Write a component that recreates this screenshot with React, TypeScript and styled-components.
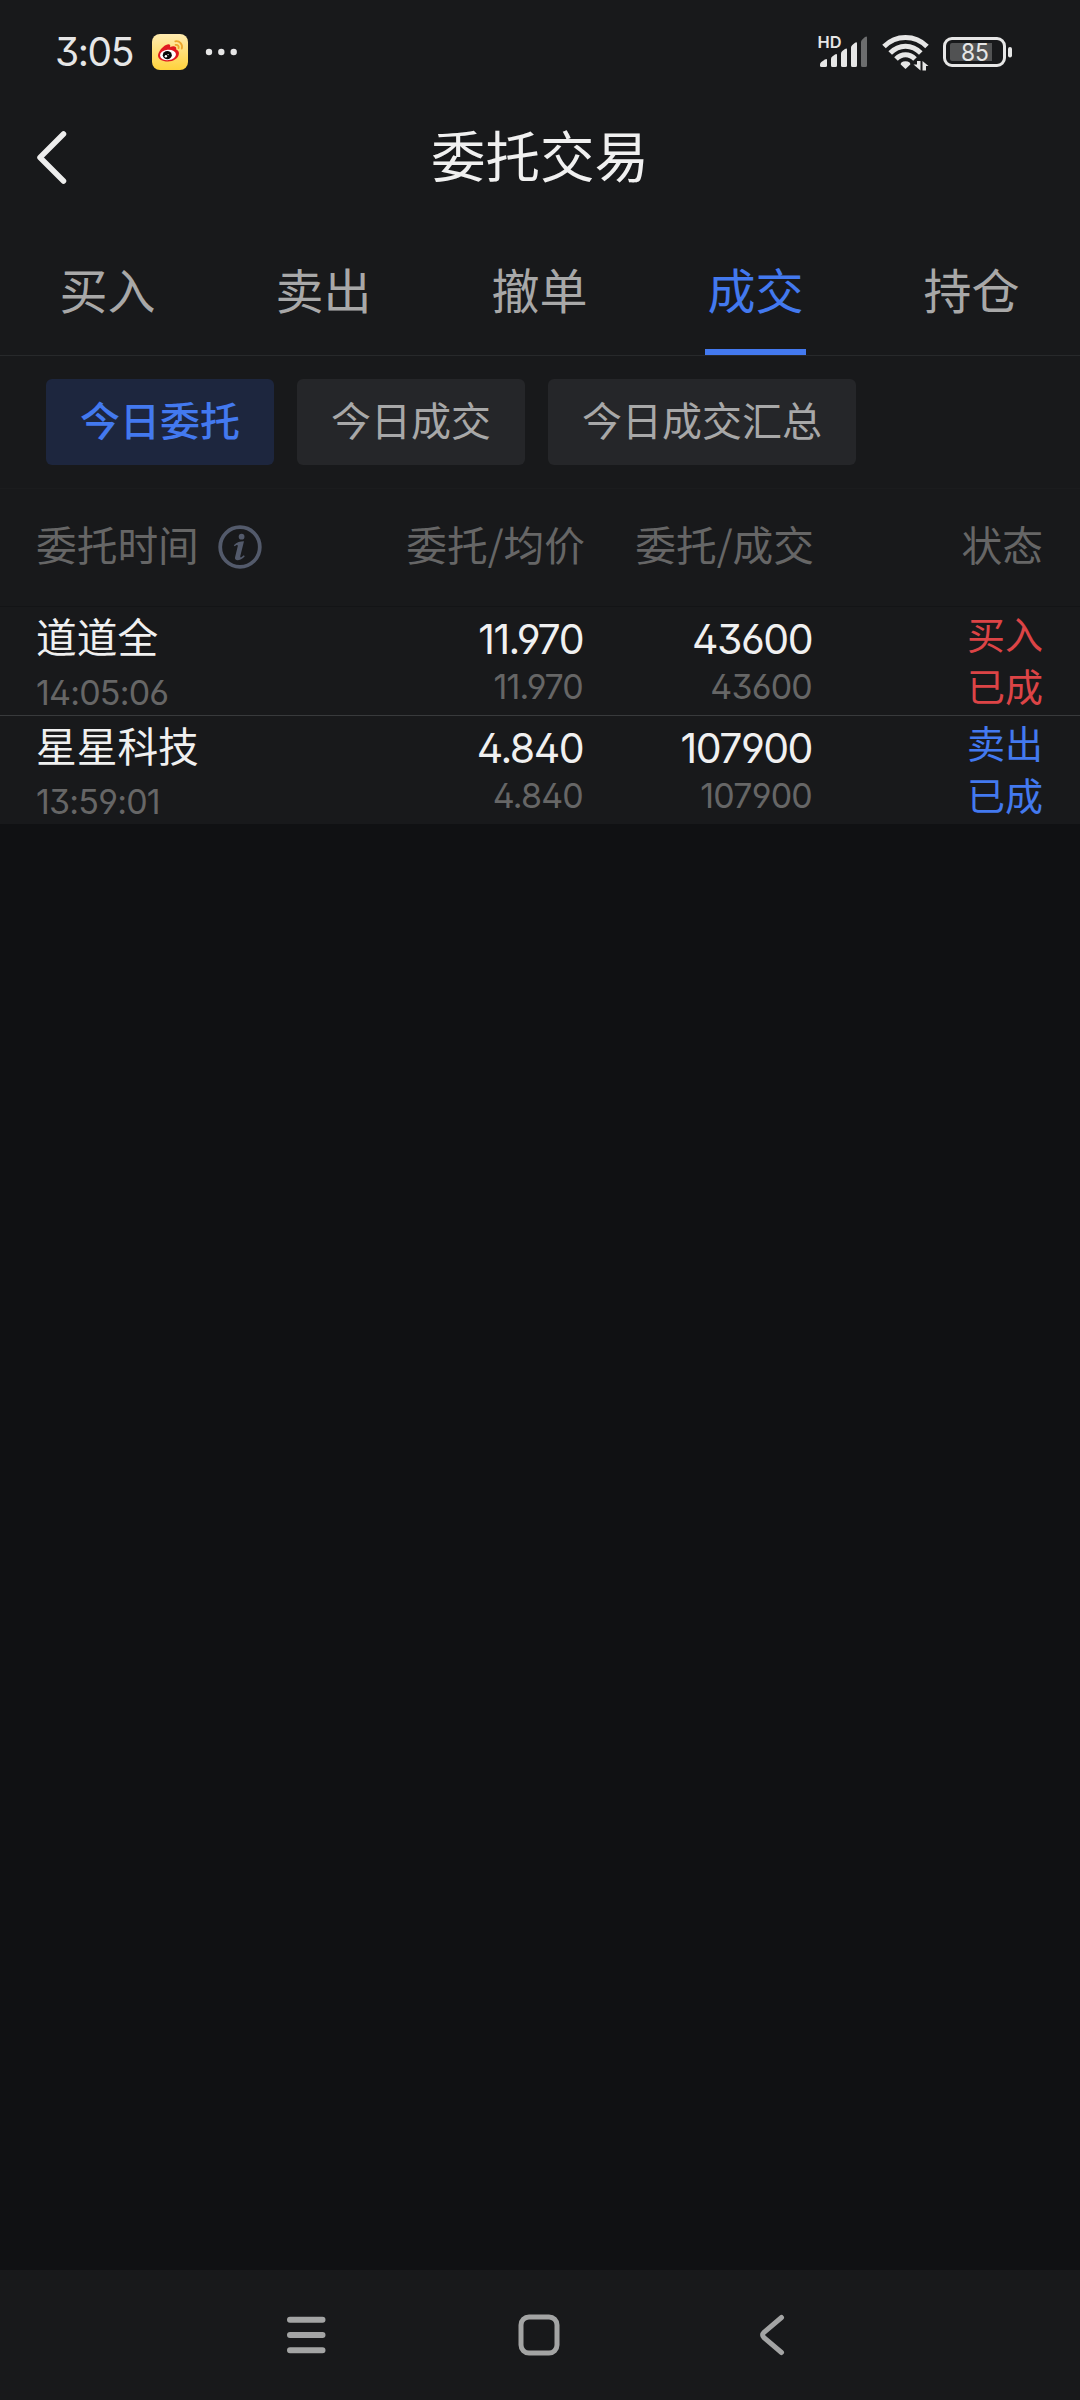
import React from "react";
import styled, { createGlobalStyle } from "styled-components";

const cjk = `"Noto Sans CJK SC", "Noto Sans", sans-serif`;
const latin = `Inter, "Noto Sans CJK SC", sans-serif`;

const color = {
  panel: "#18191b",
  page: "#101113",
  line: "#27292b",
  white: "#f0f0f0",
  tab: "#a8a8a8",
  muted: "#666666",
  blue: "#4379ef",
  red: "#dc4446",
  chip: "#252629",
  chipOn: "#1d263e",
};

const GlobalStyle = createGlobalStyle`
  html, body { margin: 0; background: ${color.page}; }
  * { box-sizing: border-box; }
`;

const Screen = styled.div`
  display: flex;
  flex-direction: column;
  width: 1080px;
  height: 2400px;
  background: ${color.page};
  font-family: ${cjk};
  overflow: hidden;
`;

const StatusBar = styled.div`
  display: flex;
  align-items: center;
  justify-content: space-between;
  height: 104px;
  padding: 0 68px 0 55px;
  background: ${color.panel};
`;

const StatusGroup = styled.div<{ $gap: number }>`
  display: flex;
  align-items: center;
  gap: ${(p) => p.$gap}px;
`;

const Clock = styled.span`
  width: 80px;
  font: 400 39px/48px ${latin};
  font-feature-settings: "cv09", "ss01";
  letter-spacing: -1.4px;
  color: #e6e6e6;
  white-space: nowrap;
`;

const TitleBar = styled.header`
  display: grid;
  grid-template-columns: 120px 1fr 120px;
  align-items: center;
  height: 105px;
  background: ${color.panel};
`;

const BackButton = styled.button`
  display: flex;
  padding: 0 0 0 35px;
  border: 0;
  background: none;
`;

const Title = styled.h1`
  margin: 0 0 6px;
  font: 400 54.5px/80px ${cjk};
  text-align: center;
  color: ${color.white};
`;

const Tabs = styled.nav`
  display: grid;
  grid-template-columns: repeat(5, 1fr);
  height: 147px;
  border-bottom: 1px solid ${color.line};
  background: ${color.panel};
`;

const Tab = styled.button<{ $active: boolean }>`
  display: flex;
  justify-content: center;
  align-items: flex-end;
  width: 101px;
  margin: 0 auto 0 57px;
  padding: 0 0 26px;
  border: 0;
  border-bottom: 6px solid ${(p) => (p.$active ? color.blue : "transparent")};
  background: none;
  font: 400 48px/70px ${cjk};
  white-space: nowrap;
  color: ${(p) => (p.$active ? color.blue : color.tab)};
`;

const Chips = styled.div`
  display: flex;
  gap: 23px;
  height: 133px;
  padding: 23px 46px 0;
  border-bottom: 1px solid #1b1c1e;
  background: ${color.panel};
`;

const Chip = styled.button<{ $active: boolean }>`
  height: 86px;
  padding: 0 34px 6px;
  border: 0;
  border-radius: 6px;
  background: ${(p) => (p.$active ? color.chipOn : color.chip)};
  font: ${(p) => (p.$active ? 500 : 400)} 40px/60px ${cjk};
  white-space: nowrap;
  color: ${(p) => (p.$active ? color.blue : color.tab)};
`;

const rowGrid = `
  display: grid;
  grid-template-columns: 303px 246px 229px 229px;
  padding: 0 37px 0 36px;
`;

const TableHead = styled.div`
  ${rowGrid}
  align-items: center;
  height: 118px;
  border-bottom: 1px solid #131416;
  background: ${color.panel};
  font: 400 40.7px/60px ${cjk};
  color: ${color.muted};
`;

const HeadCell = styled.div<{ $left?: boolean }>`
  display: flex;
  align-items: center;
  justify-content: ${(p) => (p.$left ? "flex-start" : "flex-end")};
  gap: 19px;
  margin-bottom: 7px;
  white-space: nowrap;
`;

const InfoIcon = styled.svg`
  margin-top: 6px;
`;

const OrderRow = styled.div<{ $divided: boolean }>`
  ${rowGrid}
  height: ${(p) => (p.$divided ? 109 : 108)}px;
  border-bottom: ${(p) => (p.$divided ? "1px solid #383a3c" : "0")};
  background: ${color.panel};
`;

const Cell = styled.div<{ $left?: boolean; $numeric?: boolean }>`
  display: flex;
  flex-direction: column;
  align-items: ${(p) => (p.$left ? "flex-start" : "flex-end")};
  padding-right: ${(p) => (p.$numeric ? 2 : 0)}px;
  white-space: nowrap;
`;

const StockName = styled.span`
  margin-top: 1px;
  font: 400 40.7px/56px ${cjk};
  color: ${color.white};
`;

const OrderTime = styled.span`
  margin-top: 9px;
  font: 400 34px/40px ${latin};
  font-feature-settings: "cv09", "ss01";
  letter-spacing: -0.8px;
  color: ${color.muted};
`;

const Figure = styled.span`
  margin-top: 8px;
  font: 400 41px/48px ${latin};
  font-feature-settings: "cv09", "ss01";
  letter-spacing: -1.5px;
  color: ${color.white};
`;

const SubFigure = styled.span`
  margin-top: 4px;
  font: 400 34px/40px ${latin};
  font-feature-settings: "cv09", "ss01";
  letter-spacing: -0.8px;
  color: ${color.muted};
`;

const State = styled.span<{ $buy: boolean }>`
  font: 400 38px/51.5px ${cjk};
  color: ${(p) => (p.$buy ? color.red : color.blue)};
`;

const Empty = styled.main`
  flex: 1;
`;

const NavBar = styled.footer`
  display: grid;
  grid-template-columns: 232px 241px 26px;
  padding: 44px 0 0 286px;
  height: 130px;
  background: ${color.panel};
`;

const tabs = ["买入", "卖出", "撤单", "成交", "持仓"];
const filters = ["今日委托", "今日成交", "今日成交汇总"];
const orders = [
  { name: "道道全", time: "14:05:06", price: "11.970", avg: "11.970", qty: "43600", done: "43600", side: "买入", state: "已成" },
  { name: "星星科技", time: "13:59:01", price: "4.840", avg: "4.840", qty: "107900", done: "107900", side: "卖出", state: "已成" },
];

const WeiboIcon = () => (
  <svg width="36" height="36" viewBox="0 0 36 36">
    <defs>
      <linearGradient id="wb" x1="0" y1="0" x2="0" y2="1">
        <stop offset="0" stopColor="#ffebb0" />
        <stop offset="1" stopColor="#ffd23c" />
      </linearGradient>
    </defs>
    <rect width="36" height="36" rx="8" fill="url(#wb)" />
    <path d="M6 21.5C6 17.5 12 10.6 16.3 10.2c2.2 0 2.2 1.8 1.8 3 2.4-1.2 6.8-1.6 6.1 2.2 2 .7 3 2.3 2.7 4.4-.5 4.6-5.4 7.7-11 7.7S6 25.3 6 21.5Z" fill="#e01820" />
    <ellipse cx="16" cy="20.9" rx="8" ry="5.2" fill="#fff" transform="rotate(-6 16 20.9)" />
    <ellipse cx="15.3" cy="21.2" rx="4.5" ry="4.1" fill="#080808" />
    <circle cx="13.9" cy="22.3" r="1.2" fill="#fff" />
    <circle cx="16.1" cy="20.6" r=".6" fill="#fff" />
    <g fill="none" stroke="#eda62c" strokeWidth="1.8" strokeLinecap="round">
      <path d="M23.3 7.3c4.4-.7 7.7 3 6.5 7.3" />
      <path d="M23.6 10.9c2.1-.3 3.5 1.2 3 3.2" />
    </g>
  </svg>
);

const DotsIcon = () => (
  <svg width="32" height="8" viewBox="0 0 32 8" fill="#e6e6e6">
    <circle cx="4" cy="4" r="3.2" />
    <circle cx="16.3" cy="4" r="3.2" />
    <circle cx="28.7" cy="4" r="3.2" />
  </svg>
);

const SignalIcon = () => (
  <svg width="52" height="36" viewBox="0 0 52 36" fill="#e6e6e6" overflow="visible">
    <text x="-0.5" y="14" fontFamily="Inter, sans-serif" fontSize="16.5" fontWeight="600" textLength="24" lengthAdjust="spacingAndGlyphs">HD</text>
    <path d="M2 30.5Q2 29 3.3 28L7 25.4Q9 24.5 9 26V31.5Q9 33 7.5 33H3.5Q2 33 2 31.5Z" />
    <path d="M13 25Q13 23.5 14.3 22.6L17 20.5Q19 19.4 19 21V31.5Q19 33 17.5 33H14.5Q13 33 13 31.5Z" />
    <path d="M23 19.5Q23 18 24.3 17L27 15Q29 13.8 29 15.5V31.5Q29 33 27.5 33H24.5Q23 33 23 31.5Z" />
    <path d="M33 13.5Q33 12 34.3 11L37 8.8Q39 7.6 39 9.4V31.5Q39 33 37.5 33H34.5Q33 33 33 31.5Z" />
    <path fill="#6c6d6e" d="M43 8Q43 6.5 44.3 5.5L47 3Q49 1.6 49 3.5V31.5Q49 33 47.5 33H44.5Q43 33 43 31.5Z" />
  </svg>
);

const WifiIcon = () => (
  <svg width="48" height="38" viewBox="0 0 48 38">
    <g fill="none" stroke="#e6e6e6" strokeWidth="5">
      <path d="M2 13.5C14 1.5 33 1.5 45 13.5" />
      <path d="M8.2 20C17 10.9 30 10.9 38.8 20" />
      <path d="M14 26C19.5 20.3 27.5 20.3 33 26" />
    </g>
    <path d="M23.5 36L18.7 31.5Q18.3 28.5 23.5 28.3Q28.7 28.5 28.3 31.5Z" fill="#e6e6e6" />
    <path d="M38.5 28V37.5L31.5 31.5H35V28ZM40.5 37.5V28L46.5 33H44V37.5Z" fill="#e6e6e6" />
  </svg>
);

const BatteryIcon = () => (
  <svg width="70" height="32" viewBox="0 0 70 32">
    <rect x="2.5" y="2.5" width="60" height="27" rx="7.5" fill="none" stroke="#e6e6e6" strokeWidth="3" />
    <path d="M10 7H50V25H10Q8 25 8 23V9Q8 7 10 7Z" fill="#515253" />
    <rect x="66" y="11" width="4" height="10.5" rx="2" fill="#e6e6e6" />
    <text x="33" y="25.2" textAnchor="middle" fontFamily="Inter, sans-serif" fontSize="24.5" fontWeight="400" textLength="28" lengthAdjust="spacingAndGlyphs" fill="#e6e6e6">85</text>
  </svg>
);

export default function App() {
  return (
    <Screen>
      <GlobalStyle />
      <StatusBar>
        <StatusGroup $gap={17}>
          <Clock>3:05</Clock>
          <WeiboIcon />
          <DotsIcon />
        </StatusGroup>
        <StatusGroup $gap={12}>
          <SignalIcon />
          <WifiIcon />
          <BatteryIcon />
        </StatusGroup>
      </StatusBar>
      <TitleBar>
        <BackButton aria-label="返回">
          <svg width="34" height="56" viewBox="0 0 34 56" fill="none" stroke="#ededed" strokeWidth="5.5" strokeLinecap="round" strokeLinejoin="round">
            <path d="M28.5 5L5 28.5L28.5 52" />
          </svg>
        </BackButton>
        <Title>委托交易</Title>
      </TitleBar>
      <Tabs>
        {tabs.map((t) => (
          <Tab key={t} $active={t === "成交"}>{t}</Tab>
        ))}
      </Tabs>
      <Chips>
        {filters.map((f, i) => (
          <Chip key={f} $active={i === 0}>{f}</Chip>
        ))}
      </Chips>
      <TableHead>
        <HeadCell $left>
          委托时间
          <InfoIcon width="44" height="44" viewBox="0 0 44 44">
            <circle cx="22" cy="22" r="19.8" fill="none" stroke="#535a6b" strokeWidth="3.8" />
            <circle cx="23.6" cy="11.7" r="2.9" fill="#535a6b" />
            <path d="M15.8 20.2C19 17.3 22 16.3 26 16.3L22.3 31C22 33.3 23.5 32.5 25.8 30.3L26.8 31.3C23 35.5 16.5 37 17 32.5L19.8 21C19.8 19.3 18.5 20 16.7 21.2Z" fill="#535a6b" />
          </InfoIcon>
        </HeadCell>
        <HeadCell>委托/均价</HeadCell>
        <HeadCell>委托/成交</HeadCell>
        <HeadCell>状态</HeadCell>
      </TableHead>
      {orders.map((o, i) => (
        <OrderRow key={o.name} $divided={i < orders.length - 1}>
          <Cell $left>
            <StockName>{o.name}</StockName>
            <OrderTime>{o.time}</OrderTime>
          </Cell>
          <Cell $numeric>
            <Figure>{o.price}</Figure>
            <SubFigure>{o.avg}</SubFigure>
          </Cell>
          <Cell $numeric>
            <Figure>{o.qty}</Figure>
            <SubFigure>{o.done}</SubFigure>
          </Cell>
          <Cell>
            <State $buy={o.side === "买入"}>{o.side}</State>
            <State $buy={o.side === "买入"}>{o.state}</State>
          </Cell>
        </OrderRow>
      ))}
      <Empty />
      <NavBar>
        <svg width="40" height="42" viewBox="0 0 40 42" stroke="#a3a4a4" strokeWidth="6" strokeLinecap="round">
          <path d="M4 5.7H36.5M4 21H36.5M4 36.3H36.5" />
        </svg>
        <svg width="42" height="42" viewBox="0 0 42 42" fill="none" stroke="#a3a4a4" strokeWidth="5">
          <rect x="3" y="3" width="36" height="36" rx="8" />
        </svg>
        <svg width="26" height="42" viewBox="0 0 26 42" fill="none" stroke="#a3a4a4" strokeWidth="5" strokeLinecap="round">
          <path d="M22.5 3.5L5 18.3Q2.2 21 5 23.7L22.5 38.5" />
        </svg>
      </NavBar>
    </Screen>
  );
}
